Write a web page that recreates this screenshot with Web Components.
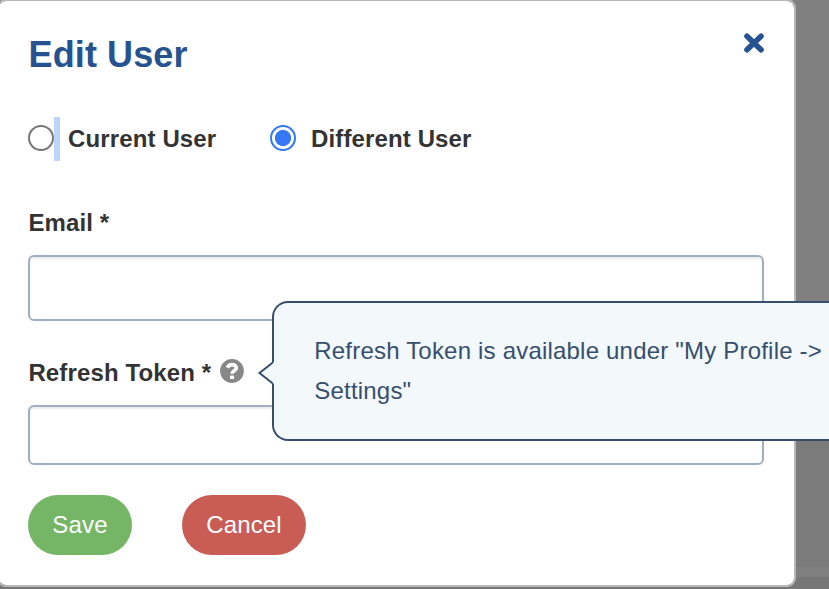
<!DOCTYPE html>
<html lang="en">
<head>
<meta charset="utf-8">
<title>Edit User</title>
<style>
  html, body {
    margin: 0;
    height: 100%;
    overflow: hidden;
  }
  body {
    font-family: "Liberation Sans", Arial, sans-serif;
    font-size: 24px;
    color: #333;
    background: linear-gradient(#808080 0 440px, #7b7b7b 440px 567px, #808080 567px 577px, #777 577px);
  }
</style>
</head>
<body>
<modal-dialog>
  <span slot="title">Edit User</span>
  <radio-row slot="fields">
    <radio-option selection style="--label-gap: 8px; --option-width: 189px">Current User</radio-option>
    <radio-option checked>Different User</radio-option>
  </radio-row>
  <text-field slot="fields" style="--input-height: 66px">Email *</text-field>
  <text-field slot="fields" style="--input-height: 60px">
    Refresh Token *
    <help-tip slot="help">Refresh Token is available under "My Profile -&gt; Settings"</help-tip>
  </text-field>
  <pill-button slot="actions" style="--pill-width: 104px; --pill-color: #74b566">Save</pill-button>
  <pill-button slot="actions" style="--pill-width: 124px; --pill-color: #c95c54">Cancel</pill-button>
</modal-dialog>

<script>
const define = (name, html) => {
  const template = document.createElement('template')
  template.innerHTML = html

  customElements.define(name,
    class extends HTMLElement {
      /**
       * Attaches a shadow DOM holding a copy of the template.
       */
      constructor () {
        super()
        this.attachShadow({ mode: 'open' })
        this.shadowRoot.appendChild(template.content.cloneNode(true))
      }
    })
}

define('modal-dialog', `
  <style>
    :host {
      display: flex;
      flex-direction: column;
      box-sizing: border-box;
      width: 799px;
      height: 588px;
      margin: -1px 0 0 -3px;
      padding: 30px 30px 0 29px;
      background: white;
      background-clip: padding-box;
      border: 2px solid #b8b8b8;
      border-radius: 9px;
    }
    header {
      display: flex;
      justify-content: space-between;
      align-items: flex-start;
      height: 86px;
    }
    h2 {
      margin: 0 0 0 0.6px;
      color: #26538f;
      font-size: 36px;
      line-height: 48px;
      letter-spacing: 0.1px;
    }
    svg {
      display: block;
      margin-top: 2px;
    }
    footer {
      display: flex;
      gap: 50px;
      margin-top: 30px;
    }
  </style>
  <header>
    <h2><slot name="title"></slot></h2>
    <svg width="20" height="20" viewBox="0 0 20 20">
      <path d="M3 3.3 17 16.7M17 3.3 3 16.7" fill="none" stroke="#26538f" stroke-width="5.6" stroke-linecap="round"/>
    </svg>
  </header>
  <slot name="fields"></slot>
  <footer><slot name="actions"></slot></footer>
`)

define('radio-row', `
  <style>
    :host {
      display: flex;
      gap: 53px;
      height: 86px;
    }
  </style>
  <slot></slot>
`)

define('radio-option', `
  <style>
    :host {
      display: flex;
      align-items: center;
      width: var(--option-width, auto);
      height: 44px;
      font-weight: bold;
      letter-spacing: 0.13px;
      white-space: nowrap;
    }
    .circle {
      box-sizing: border-box;
      width: 26px;
      height: 26px;
      border: 2px solid #767676;
      border-radius: 50%;
      margin-top: -2px;
    }
    :host([checked]) .circle {
      border-color: #3478f6;
      background: radial-gradient(circle, #3478f6 7.7px, white 8.4px);
    }
    .caret {
      width: 6px;
      height: 44px;
    }
    :host([selection]) .caret {
      background: #bad6fb;
    }
    .label {
      margin-left: var(--label-gap, 9px);
    }
  </style>
  <span class="circle"></span>
  <span class="caret"></span>
  <span class="label"><slot></slot></span>
`)

define('text-field', `
  <style>
    :host {
      display: block;
    }
    :host(:not(:first-of-type)) {
      margin-top: 32px;
    }
    label {
      display: flex;
      align-items: center;
      height: 40px;
      font-weight: bold;
      letter-spacing: 0.13px;
      margin: 0 0 12px 0.4px;
    }
    input {
      display: block;
      box-sizing: border-box;
      width: 736px;
      height: var(--input-height);
      border: 2px solid #a0aec4;
      border-radius: 6px;
      background: white;
      box-shadow: inset 0 2px 2px rgba(0, 0, 0, 0.075);
      outline: none;
    }
  </style>
  <label><span><slot></slot></span><slot name="help"></slot></label>
  <input type="text">
`)

define('help-tip', `
  <style>
    :host {
      position: relative;
      display: block;
      width: 24px;
      height: 24px;
      margin: -4px 0 0 9px;
      font-weight: normal;
    }
    .icon {
      display: block;
    }
    .bubble {
      position: absolute;
      left: 52px;
      top: -58px;
      box-sizing: border-box;
      width: 557px;
      height: 140px;
      padding: 28px 0 0 40px;
      border: 2px solid #364f6e;
      border-right: none;
      border-radius: 16px 0 0 16px;
      background: #f3f8fb;
      color: #364f6e;
      line-height: 40px;
      letter-spacing: 0.2px;
    }
    .arrow {
      position: absolute;
      left: -17px;
      top: 58px;
    }
  </style>
  <svg class="icon" width="24" height="24" viewBox="0 0 24 24">
    <circle cx="12" cy="12" r="11.9" fill="#888"/>
    <path d="M7.300 8.700C8.600 6.400 10 5.600 12 5.600C14.700 5.600 16.300 7.200 16.300 9.100C16.300 11.800 12 11.800 12 14.800" fill="none" stroke="white" stroke-width="3.700"/>
    <rect x="10" y="16.400" width="4" height="3.700" rx="0.500" fill="white"/>
  </svg>
  <div class="bubble">
    <svg class="arrow" width="18" height="24" viewBox="0 0 18 24">
      <path d="M16 1.500 2.500 12 16 22.500H18V1.500Z" fill="#f3f8fb"/>
      <path d="M15.500 1.800 2.500 12 15.500 22.200" fill="none" stroke="#364f6e" stroke-width="2"/>
    </svg>
    <slot></slot>
  </div>
`)

define('pill-button', `
  <style>
    :host {
      display: block;
    }
    button {
      display: block;
      width: var(--pill-width);
      height: 60px;
      padding: 0;
      border: none;
      border-radius: 30px;
      background: var(--pill-color);
      color: white;
      font: inherit;
      letter-spacing: 0.15px;
    }
  </style>
  <button type="button"><slot></slot></button>
`)
</script>
</body>
</html>
